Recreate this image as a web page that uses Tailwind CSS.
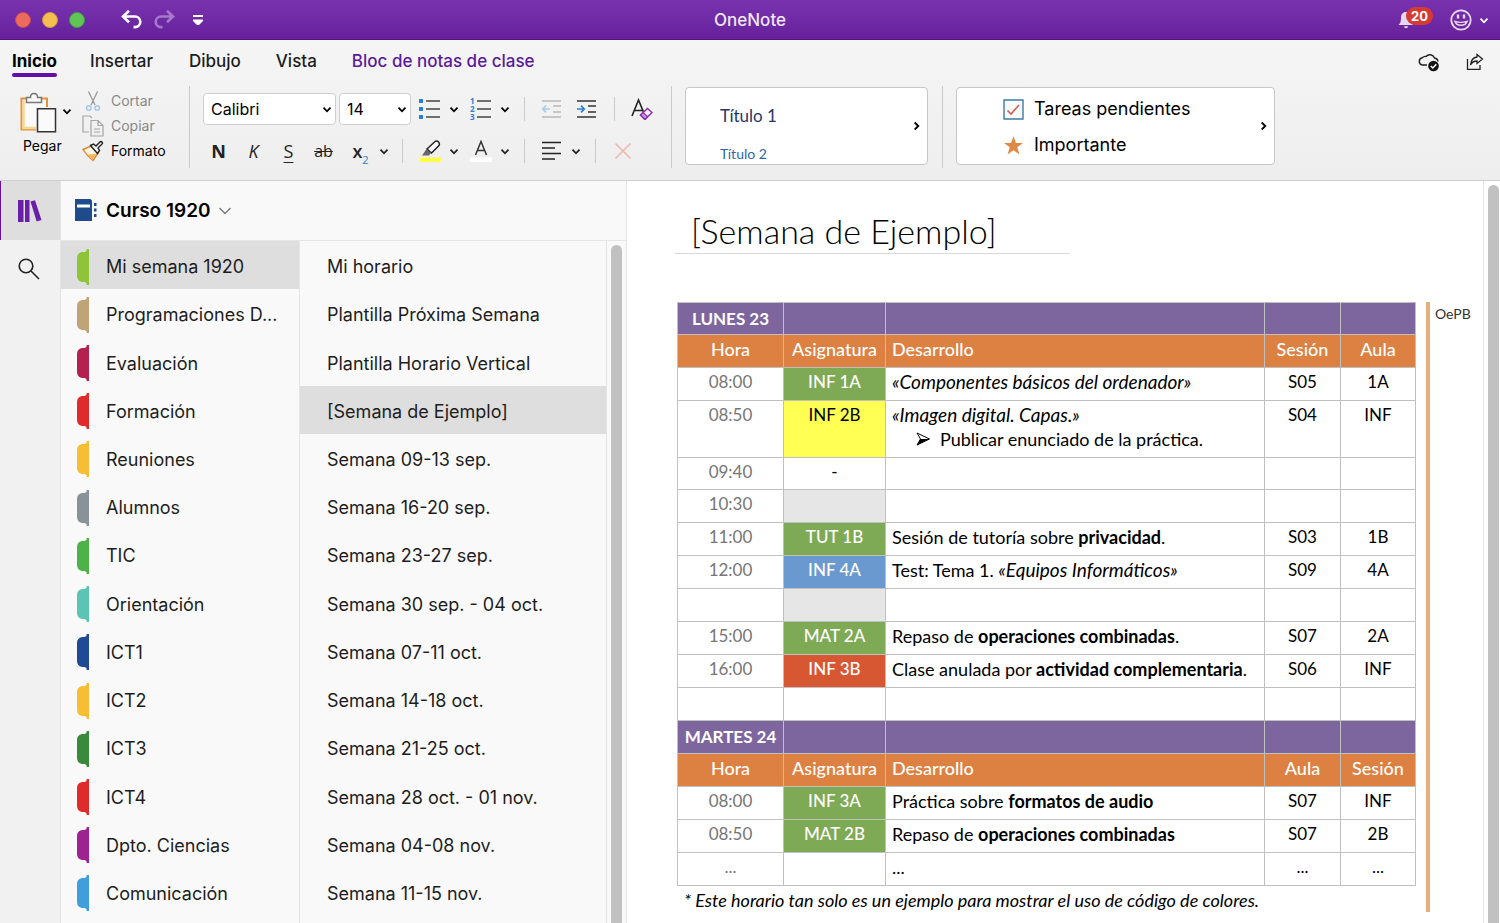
<!DOCTYPE html>
<html lang="es">
<head>
<meta charset="utf-8">
<title>OneNote</title>
<script src="https://cdn.jsdelivr.net/npm/@tailwindcss/browser@4"></script>
</head>
<body class="flex h-screen flex-col overflow-hidden bg-[#f1f1f1] font-['Inter',sans-serif] text-black">

<svg class="hidden" aria-hidden="true">
  <symbol id="chev" viewBox="0 0 16 16"><path d="M4.5 6.7 8 10.300l3.500-3.600" fill="none" stroke="currentColor" stroke-width="1.800"/></symbol>
  <symbol id="tab" viewBox="0 0 12 36"><path d="M12 0v36H9.600v-1.600L8 33H5Q0 32 0 27V9Q0 4 5 3h3l1.600-1.400V0z" fill="currentColor"/></symbol>
</svg>

<header class="flex h-10 shrink-0 items-center border-b border-[#4f1480] bg-linear-to-b from-[#7a33b0] to-[#65209a] px-[15px] text-white">
  <div class="flex flex-1 items-center">
    <div class="flex gap-[11px]">
      <button aria-label="Cerrar" class="size-4 rounded-full border border-[#c94b52] bg-[#ed6a5e]"></button>
      <button aria-label="Minimizar" class="size-4 rounded-full border border-[#cf9a45] bg-[#f4be50]"></button>
      <button aria-label="Ampliar" class="size-4 rounded-full border border-[#3f9f45] bg-[#61c555]"></button>
    </div>
    <button aria-label="Deshacer" class="ml-9"><svg class="h-5 w-[22px]" viewBox="0 0 22 20" fill="none" stroke="#fff" stroke-width="2.600"><path d="M8 .800 2 6.500l6 5.700M2 6.500h12a5.300 5.300 0 0 1 0 10.600h-1.500"/></svg></button>
    <button aria-label="Rehacer" class="ml-[10px]"><svg class="h-5 w-[22px]" viewBox="0 0 22 20" fill="none" stroke="#a679cb" stroke-width="2.600"><path d="M14 .800 20 6.500l-6 5.700M20 6.500H8a5.300 5.300 0 0 0 0 10.600h1.500"/></svg></button>
    <button aria-label="Personalizar" class="ml-[17px]"><svg class="h-3 w-3" viewBox="0 0 12 12" fill="#fff"><path d="M1 1h10v2H1zM1 5.500h10v1.500L7 11H5L1 7z"/></svg></button>
  </div>
  <h1 class="text-[17px] leading-6 font-medium text-[#efe6f6]">OneNote</h1>
  <div class="flex flex-1 items-center justify-end">
    <button class="relative flex w-[34px] items-center" aria-label="20 notificaciones">
      <svg class="h-[18px] w-4" viewBox="0 0 16 18" fill="#e6d8f2"><path d="M8 1C4.500 1 3 3.500 3 6.500 3 11 2 12.500.500 14h15C14 12.500 13 11 13 6.500 13 3.500 11.500 1 8 1zM6 15.200h4a2 2 0 0 1-4 0z"/></svg>
      <span class="absolute -top-1 left-2 rounded-full bg-[#d53a33] px-[5px] text-[13px] leading-[18px] font-bold">20</span>
    </button>
    <button aria-label="Comentarios" class="ml-[18px]"><svg class="size-[22px]" viewBox="0 0 22 22" fill="none" stroke="#e6d8f2" stroke-width="1.800"><circle cx="11" cy="11" r="9.700"/><path d="M8 5.500v4M14 5.500v4" stroke-width="2.400"/><path d="M5 12.500c1.500 5 10.500 5 12 0-3 1-9 1-12 0z" stroke-width="1.500"/></svg></button>
    <button aria-label="Más" class="ml-1"><svg class="-mr-[7px] size-4"><use href="#chev"/></svg></button>
  </div>
</header>

<section class="shrink-0 border-b border-[#cfcfcf] bg-linear-to-b from-[#f5f5f5] to-[#eeeeee]">
  <nav class="flex h-[42px] items-start px-3 pt-[9px] text-[17px] leading-6 font-medium text-[#1d1d1d]">
    <a href="#" class="relative font-bold text-black after:absolute after:inset-x-0 after:top-6 after:h-1 after:rounded-full after:bg-[#6210a5]">Inicio</a>
    <a href="#" class="ml-[33px]">Insertar</a>
    <a href="#" class="ml-9">Dibujo</a>
    <a href="#" class="ml-[35px]">Vista</a>
    <a href="#" class="ml-[35px] text-[#5a1a9c]">Bloc de notas de clase</a>
    <div class="ml-auto flex items-center gap-[26px] pt-[3px] pr-1">
      <button aria-label="Sincronizado"><svg class="h-5 w-[22px]" viewBox="0 0 22 20"><path d="M9 13H4.500a3.700 3.700 0 0 1-.2-7.300A4 4 0 0 1 8 4.500 5 5 0 0 1 16.500 6a4 4 0 0 1 3.500 3.500" fill="none" stroke="#222" stroke-width="1.400"/><circle cx="15.500" cy="14" r="5.300" fill="#111"/><path d="m12.800 14 2 2 3.500-3.800" fill="none" stroke="#fff" stroke-width="1.500"/></svg></button>
      <button aria-label="Compartir"><svg class="h-5 w-[18px]" viewBox="0 0 18 20" fill="none" stroke="#222" stroke-width="1.300"><path d="M1.500 7v10.300h12.500V13"/><path d="M11 2.500 16.500 7 11 11.500V9C8 9 6 10 4.500 13 5 8 7.500 5.500 11 5z"/></svg></button>
    </div>
  </nav>

  <div class="flex h-[98px] items-start pt-1">
    <div class="flex w-[189px] shrink-0 pt-[2px] pl-5">
      <div class="flex flex-col">
        <div class="flex items-center">
          <button aria-label="Pegar" class="pt-1"><svg class="h-[42px] w-[38px]" viewBox="0 0 38 42"><path d="M1.500 6.500h25.500v31H1.500z" fill="#fafafa" stroke="#e5923c" stroke-width="2"/><path d="M3.500 8.500v27.500H17" fill="none" stroke="#f6d795" stroke-width="2.500"/><path d="M6.500 10.500v-5h4q0-4 3.500-4t3.500 4h4v5z" fill="#fafafa" stroke="#777" stroke-width="1.500"/><path d="M16 15h21v26H16z" fill="#f1f1f1"/><path d="M17.500 16.700H35.500v23H17.500z" fill="#fafafa" stroke="#333" stroke-width="1.500"/></svg></button>
          <button aria-label="Opciones de pegado" class="ml-[1px]"><svg class="size-4"><use href="#chev"/></svg></button>
        </div>
        <span class="mt-[2px] pl-[3px] text-sm leading-5">Pegar</span>
      </div>
      <div class="ml-[7px] flex flex-col text-sm leading-[25px] text-[#8a8a8a]">
        <button class="flex items-center gap-[7px]"><svg class="size-[22px]" viewBox="0 0 22 22" fill="none"><path d="M6.500 1.500 13 15M15.500 1.500 9 15" stroke="#999" stroke-width="1.300"/><circle cx="6.800" cy="18" r="2.300" stroke="#a5c8e8" stroke-width="1.500"/><circle cx="15.200" cy="18" r="2.300" stroke="#a5c8e8" stroke-width="1.500"/></svg>Cortar</button>
        <button class="flex items-center gap-[7px]"><svg class="size-[22px]" viewBox="0 0 22 22" fill="none" stroke="#a5a5a5" stroke-width="1.200"><path d="M7 17H1V1h7l2 2"/><path d="M9 5.500h7l5 5V21H9zM16 5.500v5h5M12 14h6M12 17h6"/></svg>Copiar</button>
        <button class="flex items-center gap-[7px] text-black"><svg class="size-[22px]" viewBox="0 0 22 22"><path d="M1 9.500 9 6l7 7-5 7.500Q5 16 1 9.500z" fill="#fdf3df" stroke="#de862f" stroke-width="1.400"/><path d="m5 14.500 9-.5-3.500 6z" fill="#f3b259"/><path d="m8.500 5.500 3-1.500 2.500 2 4.500-4.500q2 0 2 2L16 8l1.500 2.500-2 3z" fill="#f7f7f7" stroke="#222" stroke-width="1.400"/></svg>Formato</button>
      </div>
    </div>

    <div class="h-[82px] w-px bg-[#cacaca]"></div>
    <div class="flex w-[481px] shrink-0 flex-col gap-[10px] pt-[7px] pl-[10px]">
      <div class="flex h-8 items-center pl-[3px]">
        <div class="relative w-[133px]"><select aria-label="Fuente" class="h-8 w-full appearance-none rounded-[4px] border border-[#cfcfcf] bg-white pl-[7px] text-base"><option>Calibri</option></select><svg class="pointer-events-none absolute top-2 right-[1px] size-4"><use href="#chev"/></svg></div>
        <div class="relative ml-[3px] w-[72px]"><select aria-label="Tamaño" class="h-8 w-full appearance-none rounded-[4px] border border-[#cfcfcf] bg-white pl-[7px] text-base"><option>14</option></select><svg class="pointer-events-none absolute top-2 right-[1px] size-4"><use href="#chev"/></svg></div>
        <button aria-label="Viñetas" class="ml-2"><svg class="size-[22px]" viewBox="0 0 22 22"><path d="M0 1h4v4H0zM0 9h4v4H0zM0 17h4v4H0z" fill="#2b7fd0"/><path d="M7 3h14M7 11h14M7 19h14" stroke="#444" stroke-width="1.400"/></svg></button>
        <button aria-label="Opciones de viñetas" class="ml-[5px]"><svg class="size-4"><use href="#chev"/></svg></button>
        <button aria-label="Numeración" class="ml-2"><svg class="size-[22px] overflow-visible" viewBox="0 0 22 22"><g fill="#2b7fd0" font-family="Open Sans" font-weight="700" font-size="8"><text x="0" y="6">1</text><text x="0" y="14">2</text><text x="0" y="22">3</text></g><path d="M7 3h14M7 11h14M7 19h14" stroke="#444" stroke-width="1.400"/></svg></button>
        <button aria-label="Opciones de numeración" class="ml-[5px]"><svg class="size-4"><use href="#chev"/></svg></button>
        <div class="ml-[11px] h-6 w-px bg-[#cacaca]"></div>
        <button aria-label="Reducir sangría" class="ml-4"><svg class="size-[22px]" viewBox="0 0 22 22" fill="none" stroke="#b9b9b9" stroke-width="1.400"><path d="M1 3h19M12 8h8M12 14h8M1 19h19"/><path d="M9 11H2M5 7.700 1.800 11 5 14.300" stroke="#a9cbe8" stroke-width="1.700"/></svg></button>
        <button aria-label="Aumentar sangría" class="ml-[13px]"><svg class="size-[22px]" viewBox="0 0 22 22" fill="none" stroke="#333" stroke-width="1.400"><path d="M1 3h19M12 8h8M12 14h8M1 19h19"/><path d="M1 11h7M5 7.700 8.200 11 5 14.300" stroke="#2b7fd0" stroke-width="1.700"/></svg></button>
        <div class="ml-4 h-6 w-px bg-[#cacaca]"></div>
        <button aria-label="Borrar formato" class="ml-4"><svg class="size-[22px]" viewBox="0 0 22 22" fill="none"><path d="M1 18 7.500 2 12.500 14M3.300 12.500h8" stroke="#222" stroke-width="1.600"/><path d="m9.500 17 7-6.500 4.500 4-7 7z" fill="#f6eefa" stroke="#8b2fa8" stroke-width="1.500"/><path d="m9.500 17 2.500-2.400 4.500 4-2.500 2.900z" fill="#c79ad6" stroke="#8b2fa8" stroke-width="1.300"/></svg></button>
      </div>
      <div class="flex h-8 items-center pl-[1px] font-['Open_Sans',sans-serif] text-lg text-[#222]">
        <button aria-label="Negrita" class="w-[35px] font-bold">N</button>
        <button aria-label="Cursiva" class="w-[35px] italic">K</button>
        <button aria-label="Subrayado" class="w-[35px] underline decoration-1 underline-offset-4">S</button>
        <button aria-label="Tachado" class="w-[35px] text-base line-through decoration-1">ab</button>
        <button aria-label="Subíndice" class="w-[35px] pl-1 font-semibold">x<sub class="-bottom-[6px] text-[11px] font-normal text-[#2b7fd0]">2</sub></button>
        <button aria-label="Opciones de subíndice"><svg class="size-4"><use href="#chev"/></svg></button>
        <div class="ml-[10px] h-6 w-px bg-[#cacaca]"></div>
        <button aria-label="Resaltado" class="ml-4"><svg class="size-[22px]" viewBox="0 0 22 22"><path d="M1 17.500h21V22H1z" fill="#ffff45"/><path d="m8 9 8-7.500q2-1 3.500.5t.5 3.500L12.500 13z" fill="#fafafa" stroke="#222" stroke-width="1.500"/><path d="m7.500 9 4.500 4-2 2.500H3z" fill="#666"/></svg></button>
        <button aria-label="Opciones de resaltado" class="ml-[5px]"><svg class="size-4"><use href="#chev"/></svg></button>
        <button aria-label="Color de fuente" class="ml-2"><svg class="size-[22px]" viewBox="0 0 22 22"><path d="M0 17.500h22V22H0z" fill="#fff"/><path d="m5.500 15 5.500-13.500L16.500 15M7.500 10.500h7" fill="none" stroke="#333" stroke-width="1.500"/></svg></button>
        <button aria-label="Opciones de color" class="ml-[5px]"><svg class="size-4"><use href="#chev"/></svg></button>
        <div class="ml-[11px] h-6 w-px bg-[#cacaca]"></div>
        <button aria-label="Alinear" class="ml-4"><svg class="size-[22px]" viewBox="0 0 22 22"><path d="M1 2.500h19M1 8h13M1 13.500h19M1 19h13" stroke="#222" stroke-width="1.400"/></svg></button>
        <button aria-label="Opciones de alineación" class="ml-[5px]"><svg class="size-4"><use href="#chev"/></svg></button>
        <div class="ml-[11px] h-6 w-px bg-[#cacaca]"></div>
        <button aria-label="Eliminar" class="ml-4"><svg class="size-[22px]" viewBox="0 0 22 22"><path d="m3.500 3.500 15 15M18.500 3.500l-15 15" stroke="#efb5b0" stroke-width="1.600"/></svg></button>
      </div>
    </div>

    <div class="h-[82px] w-px bg-[#cacaca]"></div>
    <div class="mt-[1px] ml-[13px] flex h-[78px] w-[243px] shrink-0 items-center justify-between overflow-hidden rounded-[4px] border border-[#c6c6c6] bg-white pr-[3px] pl-[34px]">
      <div class="flex flex-col gap-4 self-start pt-4 font-['Lato',sans-serif]">
        <button class="text-left text-[17px] leading-6 text-[#1f3864]">Título 1</button>
        <button class="text-left text-sm leading-5 text-[#2e67a8]">Título 2</button>
      </div>
      <button aria-label="Más estilos"><svg class="size-4 -rotate-90"><use href="#chev"/></svg></button>
    </div>
    <div class="ml-[14px] h-[82px] w-px bg-[#cacaca]"></div>
    <div class="mt-[1px] ml-[13px] flex h-[78px] w-[319px] shrink-0 items-center justify-between rounded-[4px] border border-[#c6c6c6] bg-white pr-[3px] pl-[46px] text-lg leading-6">
      <div class="flex flex-col gap-3 pt-[2px]">
        <button class="flex items-center gap-[10px]"><svg class="size-[21px]" viewBox="0 0 21 21"><path d="M1 1h19v19H1z" fill="#f8fafc" stroke="#3d7ba6" stroke-width="1.400"/><path d="m4.500 11.500 3.500 3.500 8-9" fill="none" stroke="#cf5a50" stroke-width="1.600"/></svg>Tareas pendientes</button>
        <button class="flex items-center gap-[10px]"><svg class="size-[21px]" viewBox="0 0 21 21"><path d="m10.500 1 2.400 6.900h7.100l-5.700 4.400 2.100 7.200-5.900-4.300-5.900 4.300 2.100-7.200L1 7.900h7.100z" fill="#de8a44"/></svg>Importante</button>
      </div>
      <button aria-label="Más etiquetas"><svg class="size-4 -rotate-90"><use href="#chev"/></svg></button>
    </div>
  </div>
</section>

<div class="flex min-h-0 flex-1">
  <aside class="flex w-[61px] shrink-0 flex-col border-r border-[#e4e4e4] bg-[#f1f1f1]">
    <button aria-label="Blocs de notas" class="flex h-[59px] items-center border-l border-[#6210a5] bg-[#dedede] pl-[17px]"><svg class="h-[22px] w-6" viewBox="0 0 24 22" fill="#6a1fa6"><path d="M0 0h5.500v22H0zM7 0h4.500v22H7zM12.500 1.500 17 .2 23.500 20l-4.800 1.500z"/></svg></button>
    <button aria-label="Buscar" class="flex h-[58px] items-center pl-[18px]"><svg class="size-[22px]" viewBox="0 0 22 22" fill="none" stroke="#222" stroke-width="1.600"><circle cx="8" cy="8" r="6.800"/><path d="m13 13 8 8"/></svg></button>
  </aside>

  <div class="flex w-[566px] shrink-0 flex-col border-r border-[#e4e4e4] bg-[#f9f9f9]">
    <button class="flex h-[60px] shrink-0 items-center border-b border-[#e6e6e6] pl-[14px] text-[19px] font-semibold">
      <svg class="h-[23px] w-[22px]" viewBox="0 0 22 23" fill="#1f4a8c"><path d="M0 0h15.500l1.500 1.500V22H0z"/><path d="M2 5.500h13v3H2z" fill="#fff"/><path d="M19 4h2.500v3H19zM19 9.500h2.500v3H19zM19 15h2.500v3H19z"/></svg>
      <span class="mt-[2px] ml-[9px]">Curso 1920</span>
      <svg class="ml-2 h-3 w-3" viewBox="0 0 12 12"><path d="m.5 3 5.500 5.500L11.500 3" fill="none" stroke="#777" stroke-width="1.400"/></svg>
    </button>
    <div class="flex min-h-0 flex-1 text-[18px]">
      <ul class="flex w-[239px] shrink-0 flex-col border-r border-[#e6e6e6] pb-[7px] [&>li]:flex [&>li]:flex-1 [&_a]:flex [&_a]:flex-1 [&_a]:items-center [&_a]:gap-[17px] [&_a]:pt-[3px] [&_a]:pl-4 [&_a]:text-[#1d1d1d] [&_svg]:h-9 [&_svg]:w-3">
        <li class="bg-[#dedede]"><a href="#"><svg class="text-[#8fc43a]"><use href="#tab"/></svg>Mi semana 1920</a></li>
        <li><a href="#"><svg class="text-[#c0a377]"><use href="#tab"/></svg>Programaciones D...</a></li>
        <li><a href="#"><svg class="text-[#b3214f]"><use href="#tab"/></svg>Evaluación</a></li>
        <li><a href="#"><svg class="text-[#e02b2b]"><use href="#tab"/></svg>Formación</a></li>
        <li><a href="#"><svg class="text-[#f6bd35]"><use href="#tab"/></svg>Reuniones</a></li>
        <li><a href="#"><svg class="text-[#8a9299]"><use href="#tab"/></svg>Alumnos</a></li>
        <li><a href="#"><svg class="text-[#4db349]"><use href="#tab"/></svg>TIC</a></li>
        <li><a href="#"><svg class="text-[#5bc4b3]"><use href="#tab"/></svg>Orientación</a></li>
        <li><a href="#"><svg class="text-[#1f4a94]"><use href="#tab"/></svg>ICT1</a></li>
        <li><a href="#"><svg class="text-[#f6bd35]"><use href="#tab"/></svg>ICT2</a></li>
        <li><a href="#"><svg class="text-[#398a3d]"><use href="#tab"/></svg>ICT3</a></li>
        <li><a href="#"><svg class="text-[#e02b2b]"><use href="#tab"/></svg>ICT4</a></li>
        <li><a href="#"><svg class="text-[#9c2390]"><use href="#tab"/></svg>Dpto. Ciencias</a></li>
        <li><a href="#"><svg class="text-[#3f9edb]"><use href="#tab"/></svg>Comunicación</a></li>
      </ul>
      <ul class="flex flex-1 flex-col border-r border-[#e6e6e6] pb-[7px] [&>li]:flex [&>li]:flex-1 [&_a]:flex [&_a]:flex-1 [&_a]:items-center [&_a]:pt-[3px] [&_a]:pl-[27px] [&_a]:text-[#1d1d1d]">
        <li><a href="#">Mi horario</a></li>
        <li><a href="#">Plantilla Próxima Semana</a></li>
        <li><a href="#">Plantilla Horario Vertical</a></li>
        <li class="bg-[#dedede]"><a href="#">[Semana de Ejemplo]</a></li>
        <li><a href="#">Semana 09-13 sep.</a></li>
        <li><a href="#">Semana 16-20 sep.</a></li>
        <li><a href="#">Semana 23-27 sep.</a></li>
        <li><a href="#">Semana 30 sep. - 04 oct.</a></li>
        <li><a href="#">Semana 07-11 oct.</a></li>
        <li><a href="#">Semana 14-18 oct.</a></li>
        <li><a href="#">Semana 21-25 oct.</a></li>
        <li><a href="#">Semana 28 oct. - 01 nov.</a></li>
        <li><a href="#">Semana 04-08 nov.</a></li>
        <li><a href="#">Semana 11-15 nov.</a></li>
      </ul>
      <div class="flex w-[19px] flex-col pt-1 pl-1"><div class="w-[11px] flex-1 rounded-t-full bg-[#c1c1c1]"></div></div>
    </div>
  </div>

  <main class="flex min-w-0 flex-1 bg-white font-['Lato',sans-serif]">
    <div class="min-w-0 flex-1 pt-[27px] pl-12">
      <h2 class="w-[395px] border-b border-[#d9d9d9] pl-4 text-[34px] leading-[45px] font-light">[Semana de Ejemplo]</h2>
      <div class="mt-12 flex">
        <div class="ml-[2px] min-w-0 flex-1">
          <table class="w-full table-fixed border-collapse text-[17px] leading-6 [&_i]:text-[19px] [&_td]:border [&_td]:border-[#c0c0c0] [&_td]:pt-[2px] [&_td]:align-top [&_td:nth-child(3)]:pl-[6px] [&_td:nth-child(3)]:text-left [&_td:nth-child(3)]:text-[18px] [&_th]:border [&_th]:border-[#c0c0c0] [&_tr]:h-[33px] [&_tr]:text-center">
            <colgroup><col class="w-[106px]"><col class="w-[102px]"><col><col class="w-[76px]"><col class="w-[75px]"></colgroup>
            <tbody>
              <tr class="h-8! bg-[#7d669d] text-white"><th>LUNES 23</th><td></td><td></td><td></td><td></td></tr>
              <tr class="bg-[#dc8142] text-[18px] font-medium text-white"><td>Hora</td><td>Asignatura</td><td>Desarrollo</td><td>Sesión</td><td>Aula</td></tr>
              <tr><td class="text-[#767676]">08:00</td><td class="bg-[#7eaa55] font-medium text-white">INF 1A</td><td><i>«Componentes básicos del ordenador»</i></td><td>S05</td><td>1A</td></tr>
              <tr><td class="text-[#767676]">08:50</td><td class="bg-[#ffff54]">INF 2B</td><td class="pb-[6px]"><i>«Imagen digital. Capas.»</i>
                <ul class="pl-6"><li class="flex items-center gap-[10px]"><svg class="size-[14px]" viewBox="0 0 14 14"><path d="M1 1 13.500 7 1 13 4.500 7z" fill="none" stroke="#000" stroke-width="1"/><path d="M4.500 7h9L1 13z"/></svg>Publicar enunciado de la práctica.</li></ul></td><td>S04</td><td>INF</td></tr>
              <tr class="h-8!"><td class="text-[#767676]">09:40</td><td>-</td><td></td><td></td><td></td></tr>
              <tr><td class="text-[#767676]">10:30</td><td class="bg-[#e6e6e6]"></td><td></td><td></td><td></td></tr>
              <tr><td class="text-[#767676]">11:00</td><td class="bg-[#7eaa55] font-medium text-white">TUT 1B</td><td>Sesión de tutoría sobre <b>privacidad</b>.</td><td>S03</td><td>1B</td></tr>
              <tr><td class="text-[#767676]">12:00</td><td class="bg-[#6a99d0] font-medium text-white">INF 4A</td><td>Test: Tema 1. <i>«Equipos Informáticos»</i></td><td>S09</td><td>4A</td></tr>
              <tr><td></td><td class="bg-[#e6e6e6]"></td><td></td><td></td><td></td></tr>
              <tr><td class="text-[#767676]">15:00</td><td class="bg-[#7eaa55] font-medium text-white">MAT 2A</td><td>Repaso de <b>operaciones combinadas</b>.</td><td>S07</td><td>2A</td></tr>
              <tr><td class="text-[#767676]">16:00</td><td class="bg-[#d75732] font-medium text-white">INF 3B</td><td class="whitespace-nowrap">Clase anulada por <b>actividad complementaria</b>.</td><td>S06</td><td>INF</td></tr>
              <tr><td></td><td></td><td></td><td></td><td></td></tr>
              <tr class="bg-[#7d669d] text-white"><th class="whitespace-nowrap">MARTES 24</th><td></td><td></td><td></td><td></td></tr>
              <tr class="bg-[#dc8142] text-[18px] font-medium text-white"><td>Hora</td><td>Asignatura</td><td>Desarrollo</td><td>Aula</td><td>Sesión</td></tr>
              <tr><td class="text-[#767676]">08:00</td><td class="bg-[#7eaa55] font-medium text-white">INF 3A</td><td>Práctica sobre <b>formatos de audio</b></td><td>S07</td><td>INF</td></tr>
              <tr><td class="text-[#767676]">08:50</td><td class="bg-[#7eaa55] font-medium text-white">MAT 2B</td><td>Repaso de <b>operaciones combinadas</b></td><td>S07</td><td>2B</td></tr>
              <tr><td class="text-[#767676]">...</td><td></td><td>...</td><td>...</td><td>...</td></tr>
            </tbody>
          </table>
          <p class="pt-[2px] pl-[7px] text-[18px] leading-6 whitespace-nowrap italic">* Este horario tan solo es un ejemplo para mostrar el uso de código de colores.</p>
        </div>
        <div class="ml-[10px] w-1 bg-[#e5b07c]"></div>
        <p class="w-[53px] pt-[2px] pl-[5px] text-sm leading-5 text-[#333]">OePB</p>
      </div>
    </div>
    <div class="flex w-[17px] shrink-0 flex-col border-l border-[#e6e6e6] pt-1 pl-1"><div class="w-[11px] flex-1 rounded-t-full bg-[#c1c1c1]"></div></div>
  </main>
</div>
</body>
</html>
